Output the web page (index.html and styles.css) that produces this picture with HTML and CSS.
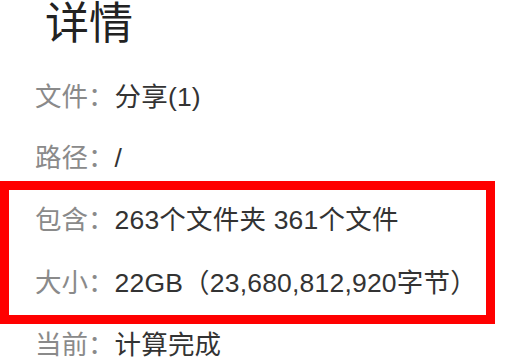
FILE: index.html
```html
<!DOCTYPE html>
<html>
<head>
  <title>详情</title>
  <link rel="stylesheet" href="styles.css">
</head>
<body>
  <div class="page">
    <h1 class="title">详情</h1>

    <div class="rows">
      <div class="row"><span class="label">文件：</span><span class="value">分享(1)</span></div>
      <div class="row"><span class="label">路径：</span><span class="value">/</span></div>
    </div>

    <div class="highlight">
      <div class="row"><span class="label">包含：</span><span class="value">263个文件夹 361个文件</span></div>
      <div class="row"><span class="label">大小：</span><span class="value">22GB（23,680,812,920字节）</span></div>
    </div>

    <div class="rows after">
      <div class="row"><span class="label">当前：</span><span class="value">计算完成</span></div>
    </div>
  </div>
</body>
</html>
```

FILE: styles.css
```css
body, html {
  margin: 0;
  padding: 0;
  background-color: #fff;
  font-family: 'Liberation Sans', 'Noto Sans CJK SC', sans-serif;
  overflow: hidden;
}

.page {
  width: 513px;
}

.title {
  margin: 0;
  padding-left: 45px;
  font-size: 44px;
  line-height: 48px;
  font-weight: normal;
  color: #222;
}

.rows {
  display: flex;
  flex-direction: column;
  gap: 25px;
  padding-left: 35px;
  margin-top: 31px;
}

.row {
  font-size: 26.5px;
  line-height: 36px;
  white-space: nowrap;
}

.label {
  color: #8a8a8a;
}

.value {
  color: #333;
  letter-spacing: 0.2px;
}

/* red frame around the size info */
.highlight {
  box-sizing: border-box;
  width: 495px;
  margin-top: 5px;
  border: 9px solid #f00;
  padding: 12px 0 14px 26px;
  display: flex;
  flex-direction: column;
  gap: 27px;
}

.rows.after {
  margin-top: 3px;
}
```
